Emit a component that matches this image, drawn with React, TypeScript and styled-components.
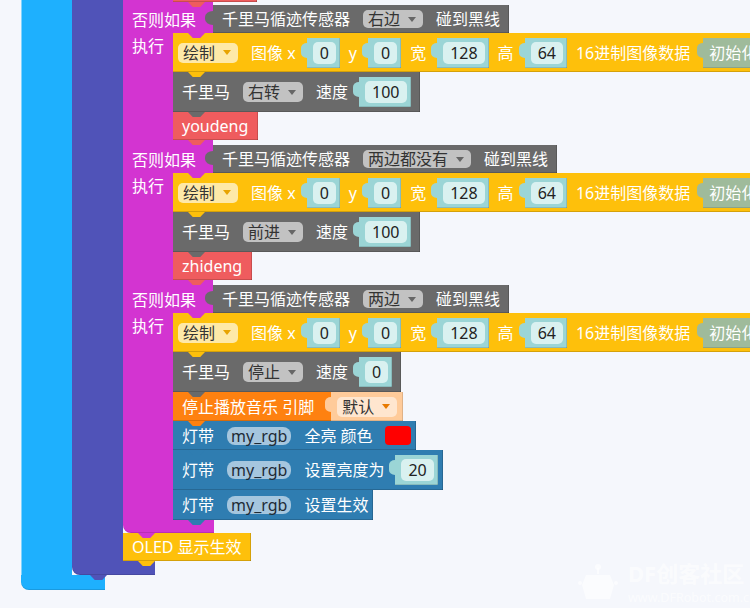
import React from 'react';
import styled, { createGlobalStyle, css } from 'styled-components';

const palette = {
  page: '#f5f7fc',
  sky: '#1eb0fe',
  indigo: '#5053b8',
  magenta: '#d334d1',
  yellow: '#fec00b',
  stone: '#6a6a6a',
  coral: '#ef5c5e',
  orange: '#fe8110',
  peach: '#ffcb9a',
  steel: '#2f7db1',
  teal: '#9bd5d6',
  sage: '#9fbb9b',
};

const GlobalStyle = createGlobalStyle`
  html, body {
    margin: 0;
    padding: 0;
    background: ${palette.page};
  }
  body {
    overflow: hidden;
    font-family: 'Noto Sans', 'Noto Sans CJK SC', sans-serif;
  }
`;

// little downward connector under a statement block
const tab = (bg: string, left = 15) => css`
  &::after {
    content: '';
    position: absolute;
    left: ${left}px;
    top: 100%;
    width: 17px;
    height: 5px;
    background: ${bg};
    clip-path: polygon(0 0, 100% 0, 72% 100%, 28% 100%);
    z-index: 2;
  }
`;

const Workspace = styled.div`
  position: relative;
  width: 750px;
  height: 608px;
  overflow: hidden;
  padding-left: 21px;
  box-sizing: border-box;
`;

const Scroll = styled.div`
  margin-top: -26px;
  display: flex;
  flex-direction: column;
  align-items: flex-start;
`;

const Wrap = styled.div`
  display: flex;
  flex-direction: column;
  align-items: flex-start;
`;

const Body = styled.div`
  display: flex;
  align-items: stretch;
`;

const Arm = styled.div<{ $bg: string; $w: number; $edge?: boolean }>`
  flex: none;
  width: ${({ $w }) => $w}px;
  background: ${({ $bg }) => $bg};
  box-sizing: border-box;
  padding: 3px 0 0 9px;
  color: #fff;
  font-size: 16px;
  line-height: 20px;
  box-shadow: ${({ $edge }) => ($edge ? 'inset 1px 0 0 rgba(255,255,255,0.45)' : 'none')};
`;

const Foot = styled.div<{ $bg: string; $w: number; $h: number; $tab?: number }>`
  position: relative;
  width: ${({ $w }) => $w}px;
  height: ${({ $h }) => $h}px;
  background: ${({ $bg }) => $bg};
  border-bottom-left-radius: 8px;
  box-shadow: inset 0 -1px 0 rgba(0, 0, 0, 0.12);
  ${({ $bg, $tab }) => ($tab !== undefined ? tab($bg, $tab) : '')}
`;

const Gap = styled.div<{ $h: number }>`
  width: 90px;
  height: ${({ $h }) => $h}px;
  background: ${palette.magenta};
`;

const CondRow = styled.div`
  display: flex;
  height: 28px;
`;

const CondLabel = styled.div`
  flex: none;
  width: 90px;
  display: flex;
  align-items: center;
  padding-left: 9px;
  box-sizing: border-box;
  background: ${palette.magenta};
  color: #fff;
  font-size: 16px;
`;

const DoRow = styled.div`
  display: flex;
  align-items: stretch;
`;

const Stack = styled.div`
  position: relative;
  display: flex;
  flex-direction: column;
  align-items: flex-start;

  &::before {
    content: '';
    position: absolute;
    left: 15px;
    top: 0;
    width: 17px;
    height: 5px;
    background: ${palette.magenta};
    clip-path: polygon(0 0, 100% 0, 72% 100%, 28% 100%);
    z-index: 3;
  }
`;

const Block = styled.div<{
  $bg: string;
  $h: number;
  $w?: number;
  $pl?: number;
  $pr?: number;
  $tab?: boolean;
}>`
  position: relative;
  flex: none;
  display: flex;
  align-items: center;
  gap: 9px;
  width: ${({ $w }) => ($w ? `${$w}px` : 'auto')};
  height: ${({ $h }) => $h}px;
  padding: 0 ${({ $pr = 9 }) => $pr}px 0 ${({ $pl = 9 }) => $pl}px;
  box-sizing: border-box;
  background: ${({ $bg }) => $bg};
  color: #fff;
  font-size: 16px;
  line-height: 20px;
  white-space: nowrap;
  box-shadow: inset 0 -1px 0 rgba(0, 0, 0, 0.16), inset -1px 0 0 rgba(0, 0, 0, 0.16);
  ${({ $bg, $tab = true }) => ($tab ? tab($bg) : '')}
`;

// value block that plugs into a row input, with the round plug on its left
const Reporter = styled(Block)`
  &::before {
    content: '';
    position: absolute;
    left: -8px;
    top: 6px;
    width: 8px;
    height: 14px;
    background: ${({ $bg }) => $bg};
    border-radius: 8px 0 0 8px / 6px 0 0 6px;
  }
`;

const Socket = styled.div<{ $bg: string; $h: number; $pl?: number; $pr?: number; $ml?: number }>`
  position: relative;
  flex: none;
  display: flex;
  align-items: center;
  height: ${({ $h }) => $h}px;
  margin-left: ${({ $ml = 2 }) => $ml}px;
  box-sizing: border-box;
  padding: 0 ${({ $pr = 4 }) => $pr}px 0 ${({ $pl = 6 }) => $pl}px;
  background: ${({ $bg }) => $bg};
  box-shadow: inset 0 -1px 0 rgba(0, 0, 0, 0.12), inset -1px 0 0 rgba(0, 0, 0, 0.12);

  &::before {
    content: '';
    position: absolute;
    left: -6px;
    top: 5px;
    width: 6px;
    height: 15px;
    background: ${({ $bg }) => $bg};
    border-radius: 6px 0 0 6px / 5px 0 0 5px;
  }
`;

const NumField = styled.span`
  height: 22px;
  line-height: 22px;
  padding: 0 7px;
  border-radius: 5px;
  background: #d9f1f0;
  color: #222;
`;

const Drop = styled.span<{ $bg: string; $fg: string; $arrow: string; $h?: number }>`
  display: inline-flex;
  align-items: center;
  gap: 8px;
  height: ${({ $h = 20 }) => $h}px;
  margin: 0 4px;
  padding: 0 7px 0 5px;
  border-radius: 5px;
  background: ${({ $bg }) => $bg};
  color: ${({ $fg }) => $fg};

  &::after {
    content: '';
    border-left: 4px solid transparent;
    border-right: 4px solid transparent;
    border-top: 5px solid ${({ $arrow }) => $arrow};
  }
`;

const Pill = styled.span`
  height: 18px;
  line-height: 18px;
  margin: 0 4px;
  padding: 0 4px;
  border-radius: 8px;
  background: #a5c6de;
  color: #1e2b36;
`;

const Swatch = styled.span`
  width: 26px;
  height: 19px;
  margin-left: 3px;
  border-radius: 4px;
  background: #ff0000;
`;

const Watermark = styled.div`
  position: absolute;
  left: 578px;
  top: 561px;
  display: flex;
  align-items: center;
  gap: 10px;
  color: rgba(255, 255, 255, 0.6);
  pointer-events: none;
`;

const MarkText = styled.div`
  display: flex;
  flex-direction: column;
  gap: 6px;
`;

const MarkTitle = styled.span`
  font-size: 22px;
  font-weight: 700;
  line-height: 24px;
`;

const MarkUrl = styled.span`
  font-size: 12.5px;
  line-height: 13px;
`;

const NumberIn: React.FC<{ value: string; h?: number }> = ({ value, h = 30 }) => (
  <Socket $bg={palette.teal} $h={h}>
    <NumField>{value}</NumField>
  </Socket>
);

const DrawBlock: React.FC = () => (
  <Block $bg={palette.yellow} $h={39} $pl={1}>
    <Drop $bg="#fee9a8" $fg="#333" $arrow="#e8a400">绘制</Drop>
    <span>图像 x</span>
    <NumberIn value="0" />
    <span>y</span>
    <NumberIn value="0" />
    <span>宽</span>
    <NumberIn value="128" />
    <span>高</span>
    <NumberIn value="64" />
    <span>16进制图像数据</span>
    <Socket $bg={palette.sage} $h={30} $pr={8} $ml={4}>
      <span>初始化图像数据</span>
    </Socket>
  </Block>
);

const MotorBlock: React.FC<{ dir: string; speed: string }> = ({ dir, speed }) => (
  <Block $bg={palette.stone} $h={40}>
    <span>千里马</span>
    <Drop $bg="#c2c2c2" $fg="#333" $arrow="#666">{dir}</Drop>
    <span>速度</span>
    <NumberIn value={speed} />
  </Block>
);

const SensorBlock: React.FC<{ side: string }> = ({ side }) => (
  <Reporter $bg={palette.stone} $h={28} $tab={false}>
    <span>千里马循迹传感器</span>
    <Drop $bg="#c2c2c2" $fg="#333" $arrow="#666" $h={18}>{side}</Drop>
    <span>碰到黑线</span>
  </Reporter>
);

const Branch: React.FC<{ side: string; last?: boolean; children: React.ReactNode }> = ({
  side,
  last,
  children,
}) => (
  <>
    <CondRow>
      <CondLabel>否则如果</CondLabel>
      <SensorBlock side={side} />
    </CondRow>
    <DoRow>
      <Arm $bg={palette.magenta} $w={50}>执行</Arm>
      <Stack>{children}</Stack>
    </DoRow>
    {!last && <Gap $h={5} />}
  </>
);

const StripBlock: React.FC<{ label: string; children?: React.ReactNode; h?: number }> = ({
  label,
  children,
  h = 29,
}) => (
  <Block $bg={palette.steel} $h={h} $pr={5}>
    <span>灯带</span>
    <Pill>my_rgb</Pill>
    <span>{label}</span>
    {children}
  </Block>
);

const RobotMark = () => (
  <svg width="40" height="40" viewBox="0 0 40 40" fill="rgba(255,255,255,0.6)">
    <circle cx="20" cy="4" r="3" />
    <rect x="19" y="5" width="2" height="6" />
    <path d="M8 12 L32 12 L36 22 L32 36 L8 36 L4 22 Z" />
    <circle cx="2" cy="20" r="2" />
    <circle cx="38" cy="20" r="2" />
  </svg>
);

const App: React.FC = () => (
  <>
    <GlobalStyle />
    <Workspace>
      <Scroll>
        <Wrap>
          <Body>
            <Arm $bg={palette.sky} $w={51} $edge />
            <Wrap>
              <Body>
                <Arm $bg={palette.indigo} $w={51} />
                <Wrap>
                  <Wrap>
                    {/* tail of the branch scrolled above the top edge */}
                    <DoRow>
                      <Arm $bg={palette.magenta} $w={50} />
                      <Stack>
                        <Block $bg={palette.coral} $h={28} $w={84} />
                      </Stack>
                    </DoRow>
                    <Gap $h={3} />

                    <Branch side="右边">
                      <DrawBlock />
                      <MotorBlock dir="右转" speed="100" />
                      <Block $bg={palette.coral} $h={28} $pr={10}>youdeng</Block>
                    </Branch>

                    <Branch side="两边都没有">
                      <DrawBlock />
                      <MotorBlock dir="前进" speed="100" />
                      <Block $bg={palette.coral} $h={28} $pr={10}>zhideng</Block>
                    </Branch>

                    <Branch side="两边" last>
                      <DrawBlock />
                      <MotorBlock dir="停止" speed="0" />
                      <Block $bg={palette.orange} $h={29} $pr={0}>
                        <span>停止播放音乐 引脚</span>
                        <Socket $bg={palette.peach} $h={29} $pl={2} $pr={2} $ml={8}>
                          <Drop $bg="#ffe6cf" $fg="#333" $arrow="#e87a00">默认</Drop>
                        </Socket>
                      </Block>
                      <StripBlock label="全亮 颜色">
                        <Swatch />
                      </StripBlock>
                      <StripBlock label="设置亮度为" h={40}>
                        <NumberIn value="20" />
                      </StripBlock>
                      <StripBlock label="设置生效" h={30} />
                    </Branch>

                    <Foot $bg={palette.magenta} $w={91} $h={13} $tab={15} />
                  </Wrap>
                  <Block $bg={palette.yellow} $h={28}>OLED 显示生效</Block>
                </Wrap>
              </Body>
              <Foot $bg={palette.indigo} $w={83} $h={14} $tab={18} />
            </Wrap>
          </Body>
          <Foot $bg={palette.sky} $w={84} $h={15} />
        </Wrap>
      </Scroll>
      <Watermark>
        <RobotMark />
        <MarkText>
          <MarkTitle>DF创客社区</MarkTitle>
          <MarkUrl>www.DFRobot.com.cn</MarkUrl>
        </MarkText>
      </Watermark>
    </Workspace>
  </>
);

export default App;
